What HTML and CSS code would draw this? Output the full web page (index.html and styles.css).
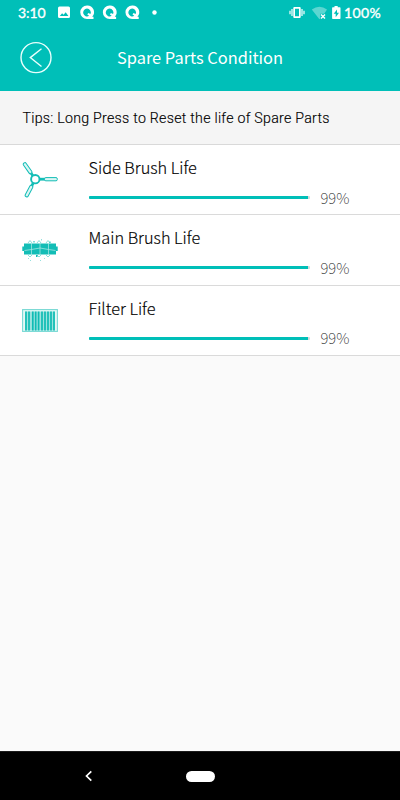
FILE: index.html
```
<!DOCTYPE html>
<html lang="en">
<head>
<meta charset="utf-8">
<title>Spare Parts Condition</title>
<link rel="stylesheet" href="styles.css">
</head>
<body>
<div class="screen">
  <header class="top">
    <div class="status">
      <span class="clock">3:10</span>
      <svg class="notices" width="102" height="16" viewBox="0 0 102 16" fill="#fff">
        <path fill-rule="evenodd" d="M1.500 .5h9q1.500 0 1.500 1.500v8.500q0 1.500-1.500 1.500h-9Q0 12 0 10.500V2Q0 .5 1.500 .5ZM1.800 10h8.600L7.700 6.300 5.600 8.800 4.100 7.200Z"/>
        <g id="bubble"><path fill-rule="evenodd" d="M29-.6a6.700 6.700 0 1 0 0 13.500h6.500v-2.200h-1.300A6.700 6.700 0 0 0 29-.6ZM29 2.600a3.900 3.900 0 0 1 3.500 5.500l-2.200-1-1 1.300 1.800 1.400A3.900 3.900 0 1 1 29 2.600Z"/></g>
        <use href="#bubble" x="22.600"/>
        <use href="#bubble" x="45.200"/>
        <circle cx="96.500" cy="6.500" r="2.200"/>
      </svg>
      <svg class="signals" width="53" height="16" viewBox="0 0 53 16" fill="#fff">
        <path fill-rule="evenodd" d="M4.300 1h5.400q1 0 1 1v9q0 1-1 1H4.300q-1 0-1-1V2q0-1 1-1ZM5 2.700v7.600h4V2.700Z"/>
        <path d="M0 4.800v3.400M2 3v7M12 3v7M14 4.800v3.400" stroke="#fff" stroke-width="1.200"/>
        <path d="M21.800 3.500q7.700-5.500 15.200 0l-2.800 4.200h-4v4.700l-.8.800Z" opacity=".36"/>
        <path d="m31 8.500 4 4m0-4-4 4" stroke="#fff" stroke-width="1.400"/>
        <path fill-rule="evenodd" d="M44.500 0h3.200v1.300h2.100q.7 0 .7.700v10.300q0 .7-.7.700h-7q-.7 0-.7-.7V2q0-.7.700-.7h1.700ZM47 3.500l-3.300 4.300h2v3.400L49 6.800h-2Z"/>
      </svg>
      <span class="charge">100%</span>
    </div>
    <div class="titlebar">
      <svg class="back" width="32" height="32" viewBox="0 0 32 32" fill="none" stroke="#e9fffd">
        <circle cx="16" cy="15.600" r="15" stroke-width="1.400"/><path d="M21.500 6.800 10.300 15.600 21.500 24.500" stroke-width="1.400"/>
      </svg>
      <h1 class="title">Spare Parts Condition</h1>
    </div>
  </header>
  <p class="tips">Tips: Long Press to Reset the life of Spare Parts</p>
  <main class="parts">
    <section class="part">
      <svg class="icon" width="36" height="36" viewBox="0 0 36 36" fill="none" stroke="#13bdb6">
        <defs><g id="side-arm"><path d="M17.500 18.200h4" stroke-width="2.800"/><rect x="20.500" y="16.600" width="12.500" height="3.200" rx="1.300" fill="#dcf6f4" stroke-width="1"/></g></defs>
        <path d="M17.800 18.200h6" stroke-width="2.800"/><rect x="22.500" y="16.600" width="12.800" height="3.200" rx="1.300" fill="#dcf6f4" stroke-width="1"/>
        <use href="#side-arm" transform="rotate(118 13.300 18.200)"/>
        <use href="#side-arm" transform="rotate(235 13.300 18.200)"/>
        <circle cx="13.300" cy="18.200" r="4.200" fill="#fff" stroke-width="1.900"/>
      </svg>
      <div class="details"><h2 class="name">Side Brush Life</h2><div class="meter"><div class="track"><div class="fill" style="width:99.5%"></div></div><span class="value">99%</span></div></div>
    </section>
    <section class="part">
      <svg class="icon" width="36" height="36" viewBox="0 0 36 36" fill="#13bdb6">
        <path d="M2 12.500h32v3h1.700v4.500H34v3.500H2V20H.3v-4.500H2Z"/>
        <path d="M9.500 12v12M18 12v12M26.500 12v12M2.500 19.500l7-1 8.500-1.500 8.500 1.500 7 1" fill="none" stroke="#b5ebe7" stroke-width=".7"/>
        <path d="m6 12 2-2.500 2 2.500m5 0 2-2.500 2 2.500m5 0 2-2.500 2 2.500M6 24l2 2 2-2m5 0 2 2 2-2m5 0 2 2 2-2" fill="none" stroke="#8bded9" stroke-width="1"/>
        <path d="M11.500 10h1v1.500h-1ZM27.500 10.500h1V12h-1ZM14 24h1.500v2H14Z"/>
        <path d="M19 8h1v1.500h-1ZM6 27h1v1H6ZM8 29h1v1H8ZM22 27h1v1h-1ZM18 29h1v1h-1Z" opacity=".45"/>
      </svg>
      <div class="details"><h2 class="name">Main Brush Life</h2><div class="meter"><div class="track"><div class="fill" style="width:99.5%"></div></div><span class="value">99%</span></div></div>
    </section>
    <section class="part">
      <svg class="icon" width="36" height="36" viewBox="0 0 36 36">
        <rect x=".6" y="7.600" width="34.800" height="21.800" fill="#e4f8f6" stroke="#78d9d4" stroke-width="1.100"/>
        <path d="M3 9.500h30v19H3Z" fill="#9be3df"/>
        <path d="M4 9.500v19M7 9.500v19M10.800 9.500v19M13.700 9.500v19M16.600 9.500v19M20 9.500v19M23 9.500v19M26 9.500v19M29 9.500v19M32 9.500v19" stroke="#0fbcb4" stroke-width="1.700"/>
      </svg>
      <div class="details"><h2 class="name">Filter Life</h2><div class="meter"><div class="track"><div class="fill" style="width:99.5%"></div></div><span class="value">99%</span></div></div>
    </section>
  </main>
  <nav class="nav">
    <svg width="8" height="12" viewBox="0 0 8 12" fill="none" stroke="#fff" stroke-width="1.700"><path d="M7.300 1.300 2.500 6l4.800 4.700"/></svg>
    <span class="home"></span>
  </nav>
</div>
</body>
</html>
```
FILE: styles.css
```
* { box-sizing: border-box; }
body { margin: 0; font-family: "Noto Sans CJK SC", sans-serif; }
h1, h2, p { margin: 0; font-weight: 400; }
svg { display: block; flex: none; overflow: visible; }
.screen { width: 400px; height: 800px; display: flex; flex-direction: column; background: #fafafa; overflow: hidden; }
.top { height: 91px; flex: none; background: #00bfb8; color: #fff; }
.status { height: 26px; display: flex; align-items: flex-start; padding: 6px 0 0 18px; font: 400 14px/14px Lato, sans-serif; -webkit-text-stroke: .35px #fff; }
.clock { width: 40px; letter-spacing: -.1px; }
.signals { margin-left: 129.500px; }
.charge { margin-left: 1.500px; letter-spacing: .4px; }
.titlebar { height: 64px; display: flex; align-items: center; padding-left: 20px; }
.title { margin: 0 0 1.500px 65px; font-size: 16.400px; line-height: 26px; }
.tips { height: 54px; flex: none; padding-left: 22.500px; line-height: 55px; font-family: Roboto, sans-serif; font-weight: 300; font-size: 14.200px; letter-spacing: .26px; color: #000; -webkit-text-stroke: .15px #000; background: #f5f5f5; border-bottom: 1px solid #d9d9d9; }
.parts { flex: none; }
.part { height: 70.340px; display: flex; background: #fff; border-bottom: 1px solid #dadada; padding-left: 22px; }
.icon { margin-top: 16px; }
.details { margin-left: 30.500px; padding-top: 9px; }
.name { font-size: 16.300px; line-height: 26px; font-weight: 300; color: #000; -webkit-text-stroke: .15px #000; }
.meter { display: flex; align-items: center; margin-top: 5.500px; }
.track { width: 221px; height: 3px; border-radius: 1px; background: #d8d8d8; overflow: hidden; }
.fill { height: 100%; background: #00bfb8; }
.value { margin-left: 11px; font-size: 15px; line-height: 24px; font-weight: 100; color: #111; }
.nav { height: 49px; margin-top: auto; background: #000; display: flex; align-items: center; padding-left: 84px; border-top: 1px solid #1c1c1c; }
.home { width: 29px; height: 11px; border-radius: 6px; background: #fff; margin-left: 94px; }
```
